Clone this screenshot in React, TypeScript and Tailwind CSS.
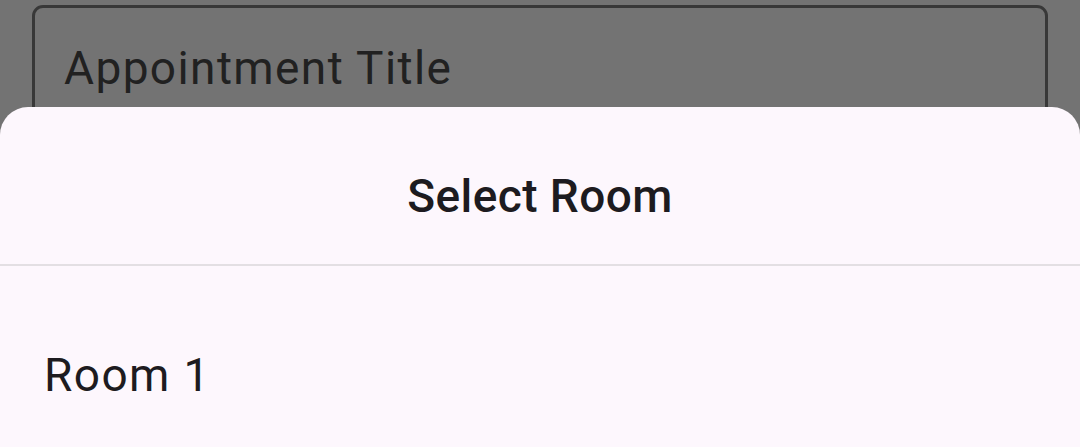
import React from 'react';

const rooms = ['Room 1'];

export default function App() {
  return (
    <div
      className="relative h-[447px] w-[1080px] overflow-hidden bg-[#737373]"
      style={{ fontFamily: 'Roboto, "Noto Sans", sans-serif' }}
    >
      {/* Form behind the scrim */}
      <div className="pl-[32px] pr-[32px] pt-[5px]">
        <div className="flex h-[154px] items-start rounded-[11px] border-[3px] border-[#383838] pl-[29px] pt-[33px]">
          <span className="text-[46px] leading-[54px] tracking-[1.4px] text-[#212121]">
            Appointment Title
          </span>
        </div>
      </div>

      {/* Bottom sheet */}
      <div className="absolute inset-x-0 bottom-0 top-[107px] rounded-t-[28px] bg-[#fdf7fd]">
        <div className="flex h-[157px] items-center justify-center pt-[21px]">
          <h2 className="text-[46px] font-medium leading-[54px] tracking-[0.43px] text-[#1d1b20]">
            Select Room
          </h2>
        </div>
        <div className="h-[2px] bg-[#e3dfe3]" />
        <ul className="pt-[22px]">
          {rooms.map((room) => (
            <li key={room} className="flex h-[154px] items-center px-[44px] pt-[19px]">
              <span className="text-[46px] leading-[54px] tracking-[1.4px] text-[#1d1b20]">{room}</span>
            </li>
          ))}
        </ul>
      </div>
    </div>
  );
}
